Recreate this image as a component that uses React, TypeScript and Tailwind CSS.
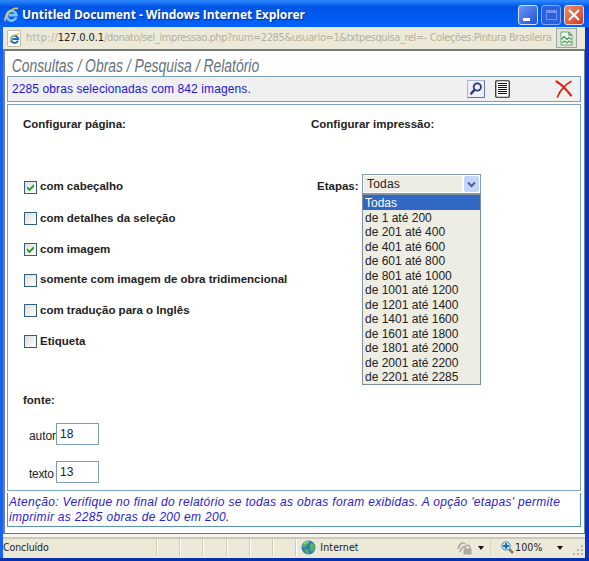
import React from 'react';

const options = [
  'Todas', 'de 1 até 200', 'de 201 até 400', 'de 401 até 600', 'de 601 até 800',
  'de 801 até 1000', 'de 1001 até 1200', 'de 1201 até 1400', 'de 1401 até 1600',
  'de 1601 até 1800', 'de 1801 até 2000', 'de 2001 até 2200', 'de 2201 até 2285',
];

const checks = [
  { label: 'com cabeçalho', on: true, cls: 'h-[32px]' },
  { label: 'com detalhes da seleção', on: false, cls: 'h-[31px]' },
  { label: 'com imagem', on: true, cls: 'h-[31px]' },
  { label: 'somente com imagem de obra tridimencional', on: false, cls: 'h-[30px]' },
  { label: 'com tradução para o Inglês', on: false, cls: 'h-[31px]' },
  { label: 'Etiqueta', on: false, cls: 'h-[31px]' },
];

function IeGlyph({ className, stroke }: { className: string; stroke: string }) {
  return (
    <svg className={className} viewBox="0 0 16 16" fill="none">
      <path d="M13 11.200A5.200 5.200 0 1 1 13.300 8.600H5" stroke={stroke} strokeWidth="2.8" />
      <path d="M1.800 14.800C-.8 11.500 8.500-.6 15 1.700" stroke="#e9c64c" strokeWidth="1.8" />
    </svg>
  );
}

function Check({ on }: { on: boolean }) {
  return (
    <span className="flex size-[13px] shrink-0 items-center justify-center border border-[#315f89] bg-linear-to-br from-[#dddfdc] to-white">
      {on && (
        <svg className="size-[9px]" viewBox="0 0 9 9">
          <path d="M1 3.2 3.4 5.6 8 1v2.7L3.4 8.2 1 5.8Z" fill="#21a121" />
        </svg>
      )}
    </span>
  );
}

function TitleButtons() {
  return (
    <div className="flex gap-[3px]">
      <span className="flex size-[20px] rounded-[3px] border border-[#d5e2fb] bg-linear-to-br from-[#6e97f3] to-[#1f4fd8]">
        <span className="mt-[12px] ml-[4px] h-[3px] w-[7px] bg-white" />
      </span>
      <span className="flex size-[20px] items-center justify-center rounded-[3px] border border-[#87a9f0] bg-[#2a62e2]">
        <span className="h-[10px] w-[11px] border border-t-[3px] border-[#6f96ee]" />
      </span>
      <span className="flex size-[20px] items-center justify-center rounded-[3px] border border-[#f0d5d0] bg-linear-to-br from-[#ec8a6c] to-[#cf3b16]">
        <svg className="size-[14px]" viewBox="0 0 14 14">
          <path d="m2 2 10 10M12 2 2 12" stroke="white" strokeWidth="2.2" />
        </svg>
      </span>
    </div>
  );
}

export default function App() {
  return (
    <div className="flex h-[561px] w-[589px] flex-col overflow-hidden bg-[#0a4fe0] font-['Liberation_Sans',Arial,sans-serif] whitespace-nowrap text-[#222]">
      <header className="flex h-[27px] shrink-0 items-center bg-linear-to-b from-[#2f8bff] via-[#0054e6] via-25% to-[#0062fb] pt-[2px] pr-[5px] pl-[4px]">
        <IeGlyph className="size-[15px]" stroke="#7fc4f8" />
        <h1 className="ml-[3px] flex-1 font-['Open_Sans','Noto_Sans',sans-serif] text-[12px] font-bold tracking-[-0.06px] text-white [text-shadow:1px_1px_1px_#0b2f9a]">
          Untitled Document - Windows Internet Explorer
        </h1>
        <TitleButtons />
      </header>

      <div className="flex min-h-0 flex-1 flex-col border-r-[4px] border-l-[3px] border-r-[#0a33bd] border-l-[#1763ee]">
        <div className="flex h-[22px] shrink-0 items-center bg-[#ece9d8] pl-[4px]">
          <span className="flex h-[17px] w-[14px] shrink-0 items-center justify-center rounded-[1px] border border-[#c2bfae] bg-white">
            <IeGlyph className="size-[11px] shrink-0" stroke="#1769c5" />
          </span>
          <p className="mr-[2px] ml-[5px] w-[528px] shrink-0 font-['DejaVu_Sans_Condensed','DejaVu_Sans',sans-serif] text-[11px] tracking-[-0.4px] text-[#b5b1a2]">
            <span className="tracking-[0.2px]">http://</span><span className="tracking-[-0.1px] text-[#222]">127.0.0.1</span>/donato/sel_impressao.php?num=2285&amp;usuario=1&amp;txtpesquisa_rel=- Coleções:Pintura Brasileira
          </p>
          <span className="flex h-[20px] w-[21px] shrink-0 items-center justify-center border border-[#9aa5a5] bg-[#dfe3db]">
            <svg className="h-[15px] w-[13px]" viewBox="0 0 13 15" fill="none">
              <path d="M1 1h8l3 3v10H1Z" fill="#f4fbf2" stroke="#6daa72" />
              <path d="M9 1v3h3M1.5 8.5 4 5.5l3 3 2-2 2.5 2M2 12l2.5-2L7 12l2-2 3 2" stroke="#4d9a5a" strokeWidth="1.3" />
            </svg>
          </span>
        </div>

        <main className="flex h-[485px] shrink-0 flex-col border-t-2 border-r border-b border-l-2 border-t-[#6f7b7d] border-r-[#6c8c9c] border-b-[#4f7f90] border-l-[#71818c] bg-white pr-[3px] pl-[2px]">
          <h2 className="h-[25px] w-[400px] origin-left scale-x-[0.773] pl-[6px] text-[18px] leading-[30px] text-[#65717d] italic">
            Consultas / Obras / Pesquisa / Relatório
          </h2>
          <section className="flex h-[26px] shrink-0 items-center border border-[#7b9fb5] bg-[#f0f0f1] pl-[4px] text-[#2016d0]">
            <p className="flex-1 text-[12px] tracking-[0.1px]">2285 obras selecionadas com 842 imagens.</p>
            <span className="flex size-[18px] items-center justify-center border border-[#a9b7dd] border-r-[#6476a4] border-b-[#6476a4] bg-[#edf0fa]">
              <svg className="size-[14px]" viewBox="0 0 14 14" fill="none" stroke="#2b367e">
                <circle cx="8.3" cy="5" r="3.6" strokeWidth="1.8" />
                <path d="m5.6 7.7-4 4.6" strokeWidth="2.4" />
              </svg>
            </span>
            <svg className="ml-[10px] h-[18px] w-[15px]" viewBox="0 0 15 18">
              <rect x=".75" y=".75" width="13.5" height="16.5" rx="1" fill="white" stroke="#222" strokeWidth="1.200" />
              <path d="M3 3.5h9M3 5.5h9M3 7.5h9M3 9.5h9M3 11.5h9M3 13.5h9" stroke="#111" />
            </svg>
            <svg className="mr-[7px] ml-[45px] size-[18px]" viewBox="0 0 18 18" fill="none" stroke="#df2418" strokeLinecap="round">
              <path d="M1.5 1.5C6 4 11 9 16 15.5" strokeWidth="2.2" />
              <path d="M16 1.5C11 4 5 10 2.5 17" strokeWidth="1.7" />
            </svg>
          </section>

          <section className="mt-[2px] flex h-[387px] shrink-0 border border-[#7ca4c4] text-[11.5px] font-bold">
            <div className="flex w-[294px] flex-col pl-[15px]">
              <h3 className="mt-[12px] h-[54px] leading-[14px]">Configurar página:</h3>
              {checks.map((c) => (
                <label key={c.label} className={`flex items-center gap-[3px] pl-[1px] ${c.cls}`}>
                  <Check on={c.on} />
                  <span>{c.label}</span>
                </label>
              ))}
              <h3 className="mt-[36px] leading-[14px]">fonte:</h3>
              <div className="mt-[16px] flex h-[22px] items-end pl-[6px] text-[12px] font-normal">
                <span className="w-[27px] tracking-[-0.1px]">autor</span>
                <span className="h-[22px] w-[43px] border border-[#7f9db9] pl-[3px] leading-[20px]">18</span>
              </div>
              <div className="mt-[16px] flex h-[22px] items-end pl-[6px] text-[12px] font-normal">
                <span className="w-[27px] tracking-[-0.3px]">texto</span>
                <span className="h-[22px] w-[43px] border border-[#7f9db9] pl-[3px] leading-[20px]">13</span>
              </div>
            </div>
            <div className="flex flex-col pl-[9px]">
              <h3 className="mt-[12px] h-[57px] leading-[14px]">Configurar impressão:</h3>
              <div className="flex pl-[6px]">
                <span className="w-[45px] leading-[25px]">Etapas:</span>
                <div className="w-[119px] text-[12px] font-normal">
                  <div className="flex h-[20px] items-center border border-[#7f9db9] bg-white p-[1px]">
                    <span className="h-[16px] flex-1 bg-[#eeede4] pl-[3px] leading-[16px] tracking-[0.2px]">Todas</span>
                    <span className="ml-[2px] flex h-[16px] w-[15px] items-center justify-center rounded-[2px] bg-[#c5d4fb]">
                      <svg className="size-[9px]" viewBox="0 0 9 9">
                        <path d="m1 2.5 3.5 3.5L8 2.5" fill="none" stroke="#4d6185" strokeWidth="2" />
                      </svg>
                    </span>
                  </div>
                  <ul className="border border-[#7f8f99] bg-[#edede4]">
                    {options.map((o, i) => (
                      <li key={o} className={`h-[14.54px] pl-[2px] leading-[16px] ${i === 0 ? 'bg-[#3168c5] text-white' : ''}`}>{o}</li>
                    ))}
                  </ul>
                </div>
              </div>
            </div>
          </section>

          <section className="mt-[2px] h-[34px] shrink-0 border border-t-0 border-[#5d93ad] pl-[1px] text-[12px] leading-[15px] tracking-[0.32px] text-[#2b20d2] italic">
            <p className="pt-[2px]">Atenção: Verifique no final do relatório se todas as obras foram exibidas. A opção 'etapas' permite</p>
            <p>imprimir as 2285 obras de 200 em 200.</p>
          </section>
        </main>

        <footer className="flex h-[24px] shrink-0 items-center border-t-[3px] border-[#f5f4ed] bg-[#ece9d8] font-['DejaVu_Sans_Condensed','DejaVu_Sans',sans-serif] text-[10.5px] tracking-[-0.3px] text-[#222] shadow-[inset_0_2px_1px_#cbc8b8]">
          <span className="w-[153px] tracking-[-0.1px]">Concluído</span>
          {[0, 1, 2, 3, 4, 5].map((n) => (
            <span key={n} className="h-[17px] w-[23.3px] border-l border-[#cfccba] shadow-[inset_1px_0_0_white]" />
          ))}
          <span className="h-[17px] w-[5px] border-l border-[#cfccba] shadow-[inset_1px_0_0_white]" />
          <svg className="ml-[1px] size-[15px]" viewBox="0 0 15 15">
            <circle cx="7.5" cy="7.5" r="7" fill="#3478bd" />
            <path d="M3 2q4-2 5 1L5 6 3 8 1 6Zm6 2 4-1 1 5-3 4-2-3ZM3 10l4-1 1 4-2 1Z" fill="#55b655" />
            <path d="M3 4q2-3 5-2" stroke="#b4ddf3" fill="none" />
          </svg>
          <span className="ml-[4px] w-[137px] tracking-[0.1px]">Internet</span>
          <svg className="size-[15px]" viewBox="0 0 15 15" fill="none" stroke="#aaa9a3">
            <path d="M1 9q3-9 7-5M3 12q2-7 6-5" strokeWidth="1.600" />
            <path d="M8 9V7q2.500-4 5 0v2" strokeWidth="1.3" />
            <rect x="7" y="9" width="7" height="5" fill="#aaa9a1" />
          </svg>
          <svg className="ml-[6px] h-[4px] w-[6px]" viewBox="0 0 6 4"><path d="M0 0h6L3 4Z" fill="#111" /></svg>
          <span className="ml-[6px] h-[17px] w-[11px] border-l border-[#d8d5c5]" />
          <svg className="size-[13px]" viewBox="0 0 13 13" fill="none">
            <path d="m8 8 4 4" stroke="#8d765e" strokeWidth="2.5" />
            <circle cx="5" cy="5" r="4.300" fill="#c8e7f5" stroke="#4b8fbb" />
            <path d="M5 2v6M2 5h6" stroke="#176bb0" strokeWidth="1.8" />
          </svg>
          <span className="ml-[1px] w-[42px] tracking-[0.1px]">100%</span>
          <svg className="h-[4px] w-[6px]" viewBox="0 0 6 4"><path d="M0 0h6L3 4Z" fill="#111" /></svg>
          <svg className="mt-[6px] ml-[10px] size-[12px] shrink-0" viewBox="0 0 12 12" fill="#b9b5a3">
            <path d="M8 0h2v2H8ZM4 4h2v2H4ZM8 4h2v2H8ZM0 8h2v2H0ZM4 8h2v2H4ZM8 8h2v2H8Z" />
          </svg>
        </footer>
        <div className="-mr-[4px] -ml-[3px] h-[3px] shrink-0 bg-[#0831ae]" />
      </div>
    </div>
  );
}
